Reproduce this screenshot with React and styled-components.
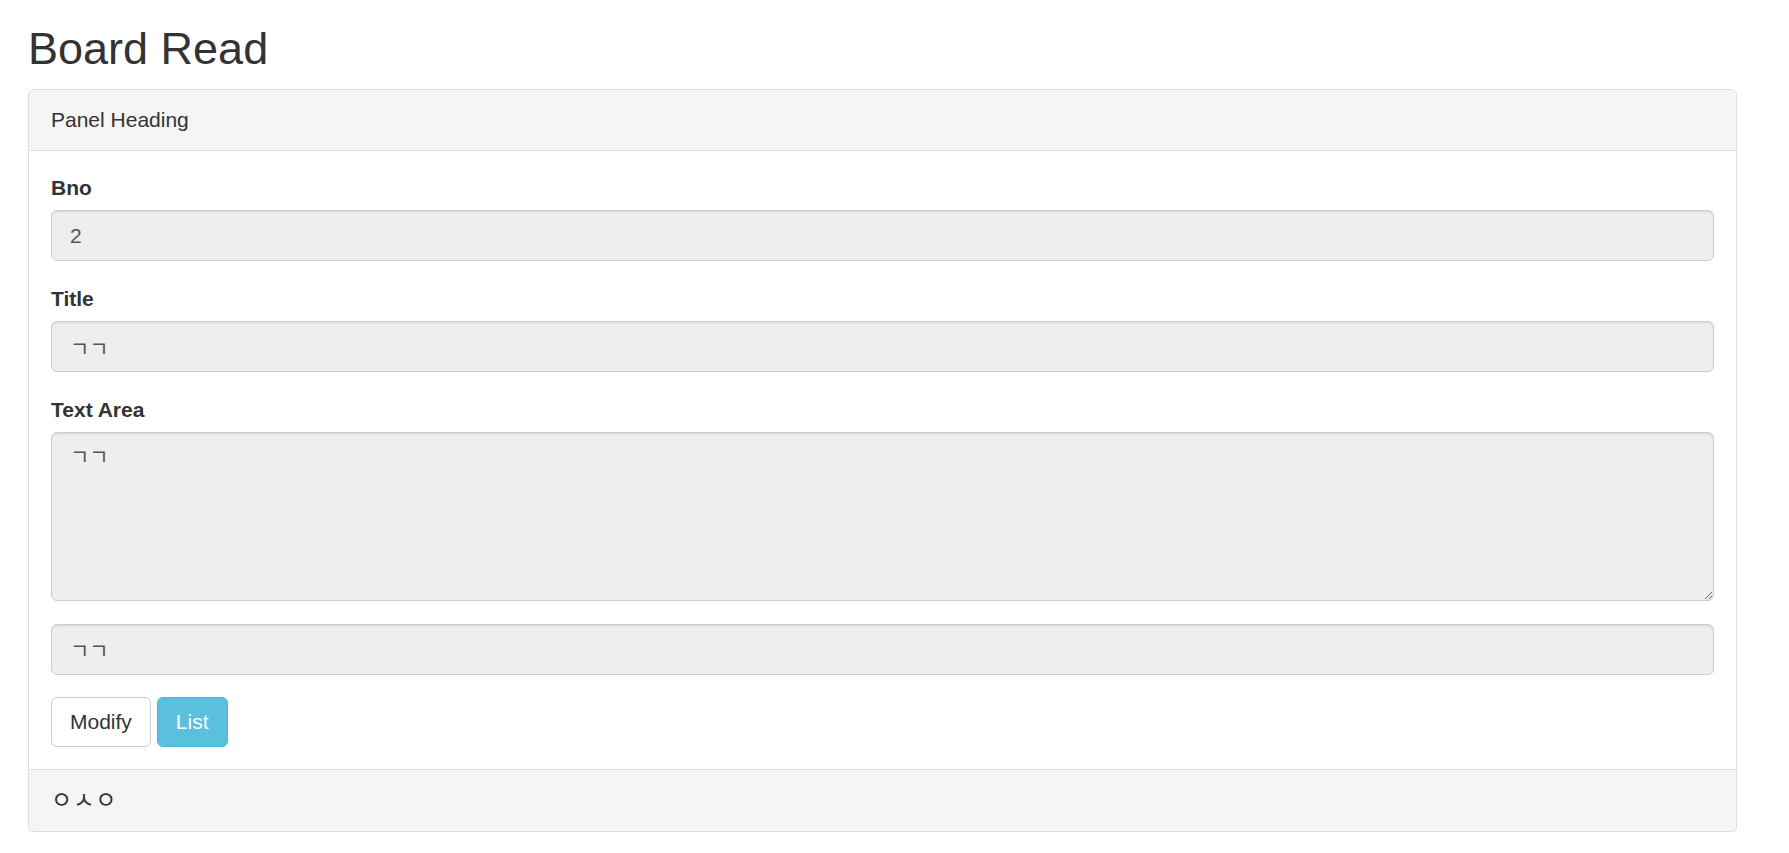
import styled, { createGlobalStyle } from "styled-components";

const GlobalStyle = createGlobalStyle`
    * { box-sizing: border-box; }
    body {
        margin: 0;
        background: #fff;
        color: #333;
        font-family: "Liberation Sans", "Noto Sans CJK KR", Arial, sans-serif;
        font-size: 21px;
        line-height: 30px;
    }
`;

const Page = styled.div`
    padding: 24px 52px 0 28px;
`;

const Title = styled.h2`
    margin: 0 0 15px;
    font-size: 45px;
    font-weight: 500;
    line-height: 49.5px;
    color: #333;
`;

const Panel = styled.div`
    width: 1709px;
    background: #fff;
    border: 1px solid #ddd;
    border-radius: 6px;
    box-shadow: 0 1.5px 1.5px rgba(0, 0, 0, 0.05);
`;

const PanelHeading = styled.div`
    padding: 15px 22px;
    background: #f5f5f5;
    border-bottom: 1px solid #ddd;
    border-radius: 5px 5px 0 0;
    color: #333;
`;

const PanelBody = styled.div`
    padding: 22px 22px 22px;
`;

const PanelFooter = styled.div`
    padding: 15px 22px;
    background: #f5f5f5;
    border-top: 1px solid #ddd;
    border-radius: 0 0 5px 5px;
`;

const FormGroup = styled.div`
    margin-bottom: 22.5px;
`;

const Label = styled.label`
    display: inline-block;
    margin-bottom: 7.5px;
    font-weight: bold;
`;

const Field = styled.input`
    display: block;
    width: 100%;
    height: 51px;
    padding: 9px 18px;
    font-family: inherit;
    font-size: 21px;
    line-height: 30px;
    color: #555;
    background: #eee;
    border: 1px solid #ccc;
    border-radius: 6px;
    box-shadow: inset 0 1.5px 1.5px rgba(0, 0, 0, 0.075);
    outline: none;
`;

const Area = styled.textarea`
    display: block;
    width: 100%;
    height: 169px;
    padding: 9px 18px;
    font-family: inherit;
    font-size: 21px;
    line-height: 30px;
    color: #555;
    background: #eee;
    border: 1px solid #ccc;
    border-radius: 6px;
    box-shadow: inset 0 1.5px 1.5px rgba(0, 0, 0, 0.075);
    outline: none;
    margin: 0;
`;

const Buttons = styled.div`
    display: flex;
    gap: 6px;
`;

const Button = styled.button`
    padding: 9px 18px;
    font-family: inherit;
    font-size: 21px;
    line-height: 30px;
    border-radius: 6px;
    border: 1px solid ${(p) => (p.$info ? "#46b8da" : "#ccc")};
    background: ${(p) => (p.$info ? "#5bc0de" : "#fff")};
    color: ${(p) => (p.$info ? "#fff" : "#333")};
    cursor: pointer;
`;

const Hangul = styled.span`
    font-size: 23px;
    letter-spacing: 1px;
`;

export default function App() {
    return (
        <Page>
            <GlobalStyle />
            <Title>Board Read</Title>
            <Panel>
                <PanelHeading>Panel Heading</PanelHeading>
                <PanelBody>
                    <FormGroup>
                        <Label>Bno</Label>
                        <Field readOnly value="2" />
                    </FormGroup>
                    <FormGroup>
                        <Label>Title</Label>
                        <Field readOnly value="ㄱㄱ" />
                    </FormGroup>
                    <FormGroup>
                        <Label>Text Area</Label>
                        <Area readOnly value="ㄱㄱ" />
                    </FormGroup>
                    <FormGroup>
                        <Field readOnly value="ㄱㄱ" />
                    </FormGroup>
                    <Buttons>
                        <Button>Modify</Button>
                        <Button $info>List</Button>
                    </Buttons>
                </PanelBody>
                <PanelFooter>
                    <Hangul>ㅇㅅㅇ</Hangul>
                </PanelFooter>
            </Panel>
        </Page>
    );
}
